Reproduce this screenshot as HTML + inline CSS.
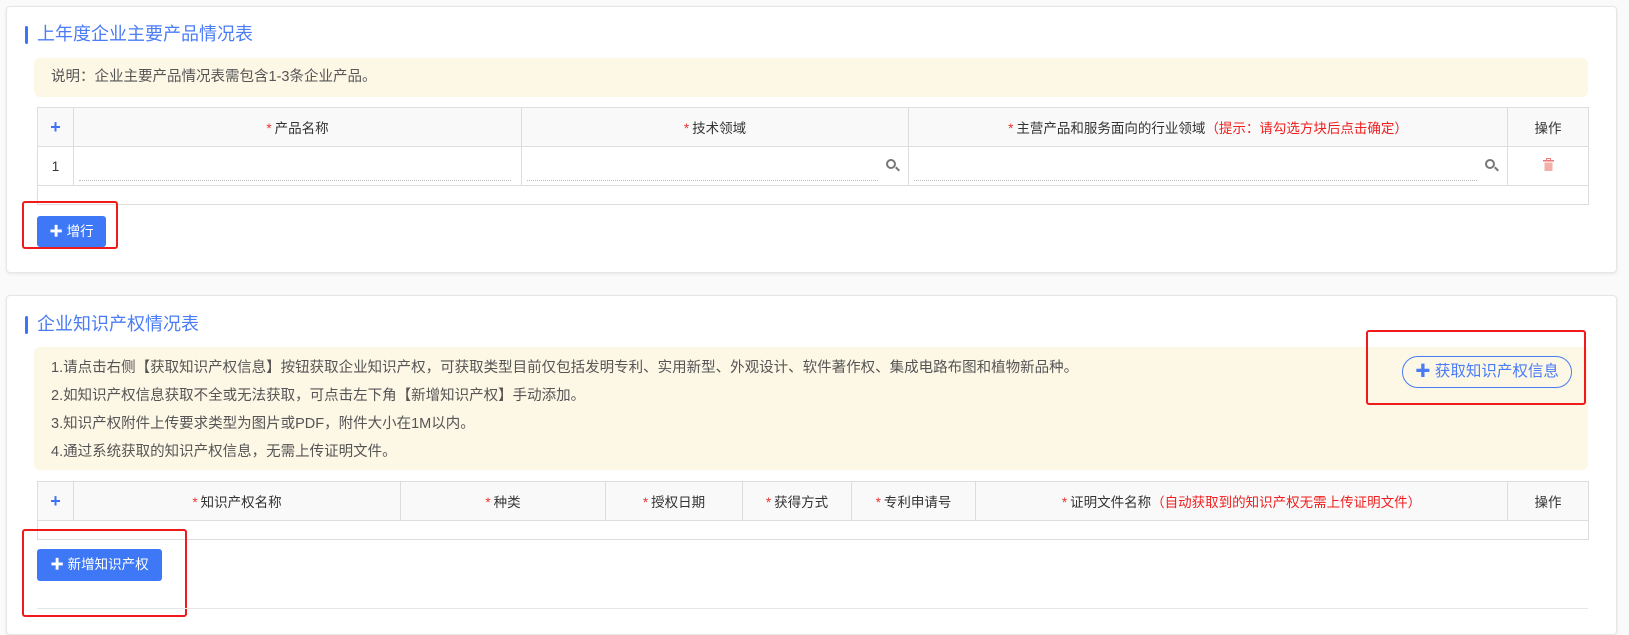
<!DOCTYPE html>
<html><head><meta charset="utf-8"><style>
*{box-sizing:border-box;margin:0;padding:0}
body{width:1629px;height:609px;background:#fafafa;font-family:"Liberation Sans","Noto Sans CJK SC",sans-serif;font-size:13.5px;color:#333;position:relative;overflow:hidden}
.card{position:absolute;left:6px;width:1611px;background:#fff;border:1px solid #e6e6e6;border-radius:4px;box-shadow:0 1px 3px rgba(0,0,0,.08)}
.title{position:absolute;left:18px;font-size:18px;color:#4a7cf6;padding-left:12px;line-height:22px}
.title:before{content:"";position:absolute;left:0;top:3px;width:3px;height:18px;background:#3d74f5;border-radius:2px}
.note{position:absolute;left:27px;width:1554px;background:#fdf7e6;border-radius:6px;color:#555;font-size:14.5px}
table{position:absolute;border-collapse:collapse;left:30px;width:1551px;table-layout:fixed}
td,th{border:1px solid #ddd;text-align:center;font-weight:normal;font-size:13.5px;color:#333}
th{background:#f9f9f9;height:39px}
.r{color:#e33;margin-right:3px}
.hint{color:#f01f1f}
.plus{color:#3d74f5;font-weight:bold;font-size:18px}
.btn{position:absolute;background:#3f78f6;color:#fff;border-radius:3px;font-size:13.5px;text-align:center;line-height:31px}
.red{position:absolute;border:2px solid #f0191b;border-radius:3px}
.inp{position:absolute;bottom:4px;left:5px;right:10px;border-bottom:1px dotted #bbb}
.mag{position:absolute;right:12px;top:12px;width:10px;height:10px;border:2px solid #777;border-radius:50%}
.mag:after{content:"";position:absolute;left:7px;top:7px;width:5px;height:2px;background:#777;transform:rotate(45deg)}
</style></head><body>
<div class="card" style="top:6px;height:267px">
 <div class="title" style="top:16px">上年度企业主要产品情况表</div>
 <div class="note" style="top:51px;height:39px;line-height:39px;padding-left:17px">说明：企业主要产品情况表需包含1-3条企业产品。</div>
 <table style="top:100px">
  <colgroup><col style="width:36px"><col style="width:448px"><col style="width:387px"><col style="width:599px"><col style="width:81px"></colgroup>
  <tr><th><span class="plus">+</span></th><th><span class="r">*</span>产品名称</th><th><span class="r">*</span>技术领域</th><th><span class="r">*</span>主营产品和服务面向的行业领域<span class="hint">（提示：请勾选方块后点击确定）</span></th><th>操作</th></tr>
  <tr style="height:39px"><td>1</td><td style="position:relative"><div class="inp"></div></td><td style="position:relative"><div class="inp" style="right:30px"></div><div class="mag"></div></td><td style="position:relative"><div class="inp" style="right:30px"></div><div class="mag"></div></td><td><svg width="11" height="13" viewBox="0 0 11 13"><rect x="0" y="2" width="11" height="1.5" fill="#e77"/><rect x="3.5" y="0.5" width="4" height="2" fill="none" stroke="#e77"/><rect x="1.5" y="4.5" width="8" height="8.5" fill="#f3b0a8"/></svg></td></tr>
  <tr style="height:19px"><td colspan="5"></td></tr>
 </table>
 <div class="btn" style="left:30px;top:209px;width:69px">✚ 增行</div>
 <div class="red" style="left:15px;top:194px;width:96px;height:48px"></div>
</div>
<div class="card" style="top:295px;height:340px">
 <div class="title" style="top:17px">企业知识产权情况表</div>
 <div class="note" style="top:51px;height:123px;padding:7px 0 0 17px;line-height:28px">1.请点击右侧【获取知识产权信息】按钮获取企业知识产权，可获取类型目前仅包括发明专利、实用新型、外观设计、软件著作权、集成电路布图和植物新品种。<br>2.如知识产权信息获取不全或无法获取，可点击左下角【新增知识产权】手动添加。<br>3.知识产权附件上传要求类型为图片或PDF，附件大小在1M以内。<br>4.通过系统获取的知识产权信息，无需上传证明文件。</div>
 <div style="position:absolute;left:1395px;top:60px;width:170px;height:32px;border:1px solid #4a7cf6;border-radius:16px;color:#4a7cf6;font-size:15.5px;line-height:30px;text-align:center"><b>✚</b> 获取知识产权信息</div>
 <div class="red" style="left:1359px;top:34px;width:220px;height:75px"></div>
 <table style="top:185px">
  <colgroup><col style="width:36px"><col style="width:327px"><col style="width:205px"><col style="width:137px"><col style="width:109px"><col style="width:124px"><col style="width:532px"><col style="width:81px"></colgroup>
  <tr><th><span class="plus">+</span></th><th><span class="r">*</span>知识产权名称</th><th><span class="r">*</span>种类</th><th><span class="r">*</span>授权日期</th><th><span class="r">*</span>获得方式</th><th><span class="r">*</span>专利申请号</th><th><span class="r">*</span>证明文件名称<span class="hint">（自动获取到的知识产权无需上传证明文件）</span></th><th>操作</th></tr>
  <tr style="height:19px"><td colspan="8"></td></tr>
 </table>
 <div class="btn" style="left:30px;top:253px;width:125px;height:32px">✚ 新增知识产权</div>
 <div class="red" style="left:15px;top:233px;width:165px;height:88px"></div>
 <div style="position:absolute;left:30px;top:312px;width:1551px;border-top:1px solid #e6e6e6"></div>
</div>
</body></html>
